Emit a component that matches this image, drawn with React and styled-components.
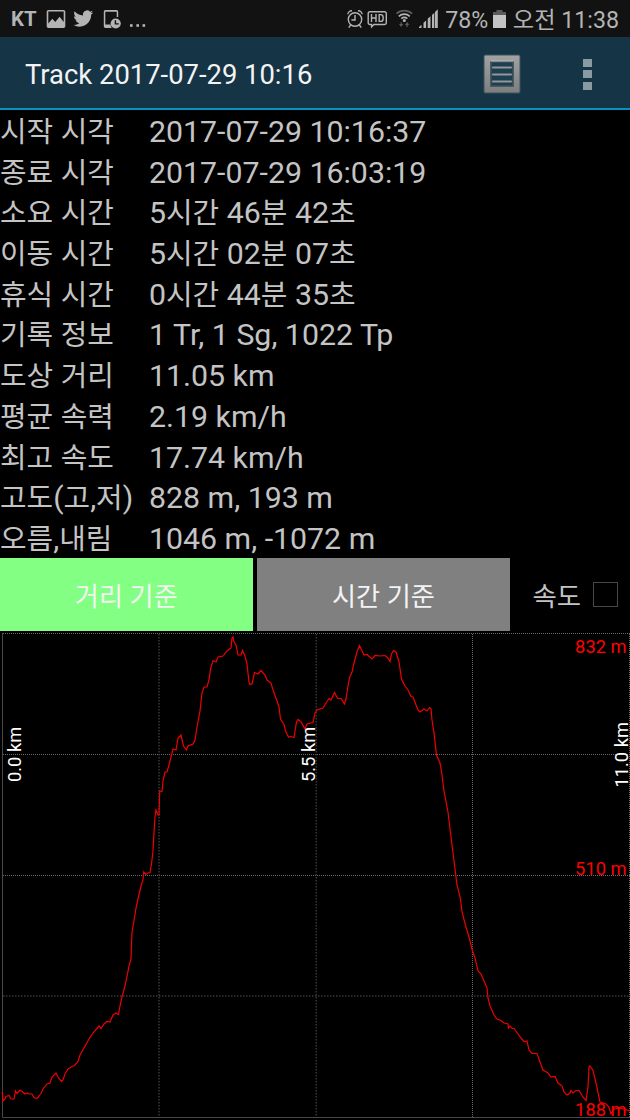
import styled, { createGlobalStyle } from 'styled-components';

const stats = [
  ['시작 시각', '2017-07-29 10:16:37'],
  ['종료 시각', '2017-07-29 16:03:19'],
  ['소요 시간', '5시간 46분 42초'],
  ['이동 시간', '5시간 02분 07초'],
  ['휴식 시간', '0시간 44분 35초'],
  ['기록 정보', '1 Tr, 1 Sg, 1022 Tp'],
  ['도상 거리', '11.05 km'],
  ['평균 속력', '2.19 km/h'],
  ['최고 속도', '17.74 km/h'],
  ['고도(고,저)', '828 m, 193 m'],
  ['오름,내림', '1046 m, -1072 m'],
];

// Elevation profile, x = distance, y = height on the chart
const profile = `2.3,1092 3,1101 5,1099 6,1096.5 9,1095.5 11,1099 14,1099 15.5,1091 17,1093.5
  20,1090 22,1091.5 25,1094 27.5,1093 29,1094 32,1094 34,1097.5 37,1098.5 41,1093.5 43,1089
  47,1084 50,1083 52,1077 56,1073 58,1077 61.5,1081.5 63,1080 65,1074 68,1069 72,1066.5
  74,1066 78,1061.5 80,1055 84,1048 89,1039 93,1033 99,1026 101,1028.5 104,1024 107,1021.5
  110,1022 113,1015 116,1013 118.5,1014.5 120,1006 122,997 125,986 127.5,974 129,966 131,959
  132,932 134,921 136,908 138,899 141,886 143,880 143.7,872 146,874.5 148,873 150,872.5
  151.5,864 153,851 154,833 155,817 156,810 158,815 159,815 159.7,791 162,791.5 163,781
  165,772 167,772 169,765 172,753 173,749 176,750 178,738 181,735 183.5,746 186.5,750
  188,746 193,744 195,740 197,727 200,711 202,693 204,687 207,687 209,680 210.5,669
  213,660.5 216,662 218,657 223,656 227,651 231,648 232,638 233,637 234,642 236,645
  238,655 241,655 242.5,650.5 245,656 247,664 249,682 250,684.5 252,684 254.5,672.5
  258,674 261,670.5 265,675 267,680 271,683 273,690 277,701 279,707 280.5,719 284,724.5
  285.5,731 288.5,737 291,736.5 294,737.5 296.5,722 298,719.5 301,722 305,729 307,724
  313,722.5 315,713 317,710 323,708 326,703 329,698.5 331,700 334.5,692.5 337.5,698.5
  341,698.5 344.5,704 346,699 348,686 349.5,678 352,672 354,663 357,652 359.5,645.5
  364,655 367,654.5 372,659 375,655.5 380,656 385,655.5 388,658 390,661.5 391.5,654
  393.5,650.5 396,652 399,662 401.5,679 405,686 408,690 411,696.5 413,697 416,705 418,710
  420,712 424,709 427,711 429.5,707.5 431,708.5 432,720 434,733 436.5,755 440,763 442,775
  444,791 448,812 451,837 454,861 457,885 460.5,899 462,912 466,927 469,937 472,949
  475,958 478,971 481,974 484,981 487,988 488,998 490,1006 494,1015 497,1019 501,1020.5
  504,1023 508,1024 508.5,1028 510,1026 512,1028.5 514,1028.5 518,1034 521,1038
  524,1041.5 527,1041 529,1050 532,1053.5 537,1053.5 540,1062 543,1070 548,1073 551,1077
  555,1076.5 558,1083 562,1086 564,1092 567,1095 570,1093 571,1090.5 573,1093 576,1090.5
  579,1090.5 583,1097 586,1100.5 588,1087 589,1067 590,1066 593,1070.5 596,1083 600,1102
  606,1104 609,1107 611,1114 614,1109 620,1108 630,1111`;

const App = () => (
  <Screen>
    <GlobalStyle />
    <StatusBar>
      <Carrier>KT</Carrier>
      <NoticeIcons />
      <SystemIcons />
      <StatusText>78%</StatusText>
      <BatteryIcon />
      <StatusText>오전 11:38</StatusText>
    </StatusBar>

    <Header>
      <Title>Track 2017-07-29 10:16</Title>
      <ListIcon />
      <MoreButton>
        <MoreDot />
        <MoreDot />
        <MoreDot />
      </MoreButton>
    </Header>

    <Stats>
      {stats.map(([label, value]) => (
        <StatRow key={label}>
          <StatLabel>
            <MixedText text={label} />
          </StatLabel>
          <StatValue>
            <MixedText text={value} />
          </StatValue>
        </StatRow>
      ))}
    </Stats>

    <Controls>
      <ModeButton $active>거리 기준</ModeButton>
      <ModeButton>시간 기준</ModeButton>
      <SpeedToggle>
        속도
        <CheckBox />
      </SpeedToggle>
    </Controls>

    <ElevationChart />
  </Screen>
);

// Hangul is set a little smaller than the digits beside it
const MixedText = ({ text }) =>
  text
    .split(/([가-힣]+)/)
    .map((part, i) => (i % 2 ? <Hangul key={i}>{part}</Hangul> : part));

const NoticeIcons = () => (
  <NoticeSvg viewBox="44 0 106 37">
    <g fill="#b4b4b4">
      <path
        fillRule="evenodd"
        d="M48.500 10h15a1.800 1.800 0 0 1 1.800 1.800v14.400a1.800 1.800 0 0 1-1.800 1.800h-15a1.800 1.800 0 0 1-1.800-1.800V11.800a1.800 1.800 0 0 1 1.800-1.800zM48.300 11.600v12l4-4.800 3 3.200 4.300-5.300 4.100 5.300V11.600z"
      />
      <path
        transform="translate(73.300 8.600) scale(.83)"
        d="M23.950 4.570a10 10 0 0 1-2.820.77 4.960 4.960 0 0 0 2.160-2.720 9.990 9.990 0 0 1-3.120 1.180 4.920 4.920 0 0 0-8.380 4.480C7.690 8.100 4.070 6.130 1.640 3.160a4.820 4.820 0 0 0-.67 2.480c0 1.710.87 3.210 2.190 4.100a4.900 4.900 0 0 1-2.230-.62v.06a4.920 4.920 0 0 0 3.950 4.830 5 5 0 0 1-2.210.08 4.940 4.940 0 0 0 4.600 3.420A9.870 9.870 0 0 1 0 19.540a13.990 13.990 0 0 0 7.550 2.210c9.050 0 14-7.500 14-13.980 0-.21 0-.42-.02-.63a9.940 9.940 0 0 0 2.460-2.550z"
      />
      <path
        fillRule="evenodd"
        d="M105.500 10h11a1.700 1.700 0 0 1 1.700 1.700V17h-1.500v-5.300h-11.400V24.500h5.200a5.800 5.800 0 0 0 1.200 3.400h-6.200a1.700 1.700 0 0 1-1.700-1.700V11.700a1.700 1.700 0 0 1 1.700-1.700z"
      />
      <circle cx="115.700" cy="23.500" r="5.100" />
      <rect x="130" y="24.200" width="2.600" height="2.600" />
      <rect x="136.400" y="24.200" width="2.600" height="2.600" />
      <rect x="142.500" y="24.200" width="2.600" height="2.600" />
    </g>
    <path d="M115.400 20.200v3.700h3.300" fill="none" stroke="#121212" strokeWidth="1.400" />
  </NoticeSvg>
);

const SystemIcons = () => (
  <SystemSvg viewBox="345 0 100 37">
    <g fill="none" stroke="#b4b4b4" strokeWidth="1.400">
      <circle cx="355" cy="19.500" r="6.700" />
      <path d="M355 15v5h-3.600M347.800 14.300a4 4 0 0 1 4.200-3.600M362.200 14.300a4 4 0 0 0-4.200-3.600M350.700 25l-2 2.600M359.300 25l2 2.600" />
      <path d="M370 11.700h14.500a1.800 1.800 0 0 1 1.800 1.800v9.200a1.800 1.800 0 0 1-1.800 1.800H374l-2.400 2.300v-2.300H370a1.800 1.800 0 0 1-1.800-1.800v-9.200a1.800 1.800 0 0 1 1.800-1.800z" />
      <path d="M371.500 14v8M376 14v8M371.500 18h4.500M379.200 14.600v6.800h1.400a2.500 2.500 0 0 0 2.500-2.500v-1.800a2.500 2.500 0 0 0-2.500-2.500z" />
    </g>
    <g fill="none" strokeWidth="1.700">
      <path d="M396.500 13.600a11.500 11.500 0 0 1 15.600 0" stroke="#5c5c5c" />
      <path d="M398.800 16.300a8 8 0 0 1 11 0M401.300 18.600a4.700 4.700 0 0 1 6 0" stroke="#b4b4b4" />
    </g>
    <circle cx="404.300" cy="20.500" r="1.500" fill="#b4b4b4" />
    <path
      d="M399 24h1.600v-1.800h1.200V24h1.400l-2.100 3zM405 25l2.100-3 2.100 3h-1.500v2h-1.200v-2z"
      fill="#5c5c5c"
    />
    <path
      d="M419 28v-1l2.500-2.200V28zM423.500 28v-5.200l2.600-2.300V28zM427.700 28v-9.200l2.800-2.500V28zM432 28V15l2.300-2.200V28zM435 28V12l2.800-2.700V28z"
      fill="#b4b4b4"
    />
  </SystemSvg>
);

const BatteryIcon = () => (
  <BatterySvg viewBox="0 0 13 18">
    <path d="M0 2h3.500V0h6v2H13v4H0z" fill="#5c5c5c" />
    <path d="M0 5h13v13H0z" fill="#c4c4c4" />
  </BatterySvg>
);

const ListIcon = () => (
  <ListSvg viewBox="0 0 38 40">
    <defs>
      <linearGradient id="metal" x1="0" y1="0" x2="0" y2="1">
        <stop offset="0" stopColor="#a2a2a2" />
        <stop offset="1" stopColor="#7e7e7e" />
      </linearGradient>
    </defs>
    <rect x=".5" y=".5" width="37" height="39" rx="1.500" fill="#365260" />
    <rect x="1.500" y="1.500" width="35" height="37" rx="1" fill="url(#metal)" />
    <rect x="7" y="7" width="24" height="26" fill="#4a5a62" />
    <rect x="8.500" y="8.500" width="21" height="23" fill="#1d3f50" />
    <path d="M7.500 7h23" stroke="#bdbdbd" />
    <path
      d="M10 13.500h18M10 20.500h18M10 27.500h18"
      stroke="#92979a"
      strokeWidth="2.200"
      strokeLinecap="round"
    />
  </ListSvg>
);

const ElevationChart = () => (
  <ChartSvg viewBox="0 631 630 489">
    <g stroke="#686868" strokeDasharray="1 1">
      <path d="M3 633.500H630M3 754.500H630M3 875.500H630" />
      <path d="M472.500 634V1117M629.500 634V1117" />
    </g>
    <g stroke="#383838" strokeWidth="1.500" strokeDasharray="1.500 1.500">
      <path d="M3 996H630M159 634V1117M316.300 634V1117" />
    </g>
    <path d="M2.500 633V1117.500H630" fill="none" stroke="#484848" />
    <polyline points={profile} fill="none" stroke="#f00000" strokeWidth="1.200" />
    <AxisText x="626.500" y="653" textAnchor="end">832 m</AxisText>
    <AxisText x="626.500" y="874.500" textAnchor="end">510 m</AxisText>
    <AxisText x="626.500" y="1115.500" textAnchor="end">188 m</AxisText>
    <AxisText $light transform="translate(20.500 782) rotate(-90)">0.0 km</AxisText>
    <AxisText $light transform="translate(314.500 782) rotate(-90)">5.5 km</AxisText>
    <AxisText $light transform="translate(628 787.500) rotate(-90)">11.0 km</AxisText>
  </ChartSvg>
);

const GlobalStyle = createGlobalStyle`
  body {
    margin: 0;
    background: #000;
  }
`;

const Screen = styled.div`
  display: flex;
  flex-direction: column;
  width: 630px;
  height: 1120px;
  overflow: hidden;
  background: #000;
  color: #c4c4c4;
  font-family: Roboto, 'Noto Sans CJK KR', sans-serif;
`;

const StatusBar = styled.div`
  display: flex;
  flex: none;
  box-sizing: border-box;
  height: 37px;
  padding: 0 11px;
  background: #121212;
  line-height: 40px;
`;

const Carrier = styled.span`
  width: 33px;
  color: #b4b4b4;
  font-size: 20.4px;
  font-weight: 700;
  line-height: 39px;
`;

const NoticeSvg = styled.svg`
  width: 106px;
  height: 37px;
  margin-right: auto;
`;

const SystemSvg = styled.svg`
  width: 100px;
  height: 37px;
`;

const StatusText = styled.span`
  color: #b4b4b4;
  font-size: 23.2px;
  white-space: nowrap;
`;

const BatterySvg = styled.svg`
  width: 13px;
  height: 18px;
  margin: 10px 6.500px 0 5px;
`;

const Header = styled.div`
  display: flex;
  flex: none;
  align-items: center;
  box-sizing: border-box;
  height: 73px;
  padding: 0 38px 0 25px;
  border-bottom: 2px solid #0a90c6;
  background: #153445;
`;

const Title = styled.h1`
  flex: 1;
  margin: 0;
  padding-top: 4px;
  color: #f3f3f3;
  font-size: 27.4px;
  font-weight: 400;
  white-space: nowrap;
`;

const ListSvg = styled.svg`
  width: 38px;
  height: 40px;
  margin-top: 2px;
`;

const MoreButton = styled.div`
  display: flex;
  flex-direction: column;
  gap: 3.500px;
  margin: 3px 0 0 62px;
`;

const MoreDot = styled.i`
  width: 9px;
  height: 8px;
  background: #8a9aa2;
`;

const Stats = styled.dl`
  flex: none;
  height: 448px;
  margin: 0;
`;

const StatRow = styled.div`
  display: flex;
  height: 40.7px;
  font-size: 30.3px;
  line-height: 44px;
  white-space: nowrap;
`;

const StatLabel = styled.dt`
  width: 149px;
`;

const StatValue = styled.dd`
  margin: 0;
`;

const Hangul = styled.span`
  font-size: 28.900px;
  line-height: 1;
`;

const Controls = styled.div`
  display: flex;
  flex: none;
  gap: 4.500px;
  height: 73px;
`;

const ModeButton = styled.button`
  width: 252.600px;
  padding: 0;
  border: 0;
  background: ${({ $active }) => ($active ? '#83ff83' : '#808080')};
  color: #f3f3f3;
  font: inherit;
  font-size: 26.200px;
`;

const SpeedToggle = styled.label`
  display: flex;
  align-items: center;
  gap: 12px;
  margin-left: 18.300px;
  font-size: 26.400px;
`;

const CheckBox = styled.span`
  box-sizing: border-box;
  width: 25px;
  height: 25px;
  border: 1px solid #484848;
`;

const ChartSvg = styled.svg`
  display: block;
  flex: none;
  width: 630px;
  height: 489px;
`;

const AxisText = styled.text`
  fill: ${({ $light }) => ($light ? '#fff' : '#f00')};
  font-size: 18.3px;
`;

export default App;
